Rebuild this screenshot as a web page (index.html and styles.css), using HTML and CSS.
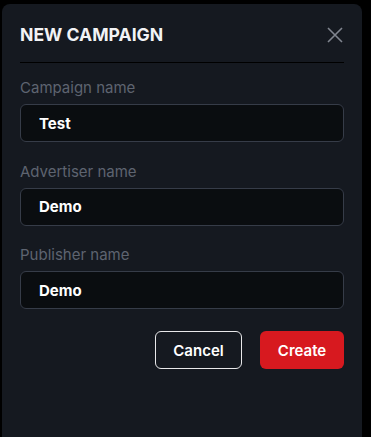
FILE: index.html
```html
<!DOCTYPE html>
<html>
<head>
  <meta charset="utf-8">
  <meta name="viewport" content="width=device-width, initial-scale=1">
  <title>New campaign</title>
  <link rel="stylesheet" href="styles.css">
</head>
<body>
  <div class="modal">
    <header class="modal-head">
      <h2>NEW CAMPAIGN</h2>
      <button type="button" class="close" aria-label="Close">
        <svg width="16" height="16" viewBox="0 0 16 16"><path d="M1 1L15 15M15 1L1 15" stroke="#80858f" stroke-width="1.6" fill="none"/></svg>
      </button>
    </header>
    <form id="campaign" action="#">
      <div class="field">
        <label for="campaign-name">Campaign name</label>
        <input type="text" id="campaign-name" name="campaign" value="Test">
      </div>
      <div class="field">
        <label for="advertiser">Advertiser name</label>
        <input type="text" id="advertiser" name="advertiser" value="Demo">
      </div>
      <div class="field">
        <label for="publisher">Publisher name</label>
        <input type="text" id="publisher" name="publisher" value="Demo">
      </div>
      <div class="actions">
        <button type="button" id="cancel">Cancel</button>
        <button type="button" id="create">Create</button>
      </div>
    </form>
  </div>
</body>
</html>
```

FILE: styles.css
```css
html, body {
  height: 100%;
}
body {
  margin: 0;
  background: #000;
  font-family: Inter, "Noto Sans", sans-serif;
  overflow: hidden;
}
.modal {
  box-sizing: border-box;
  width: 360px;
  height: calc(100% - 4px);
  margin: 4px 0 0 2px;
  padding: 0 18px 0 18px;
  background: #151920;
  border-radius: 8px 8px 0 0;
}
.modal-head {
  display: flex;
  align-items: center;
  justify-content: space-between;
  padding: 20px 0 16px;
  border-bottom: 1px solid #000;
}
h2 {
  margin: 0;
  font-size: 17.6px;
  line-height: 22px;
  font-weight: 700;
  color: #f2f3f5;
}
.close {
  background: none;
  border: none;
  padding: 0;
  margin-right: 1px;
  display: flex;
  cursor: pointer;
}
form {
  padding-top: 14px;
}
.field {
  margin-bottom: 18.5px;
}
label {
  display: block;
  font-size: 15px;
  line-height: 22px;
  color: #5e6470;
  margin-bottom: 5px;
}
input {
  box-sizing: border-box;
  width: 100%;
  height: 38px;
  padding: 0 18px;
  background: #0a0d10;
  border: 1px solid #363c48;
  border-radius: 6px;
  color: #fff;
  font-family: inherit;
  font-size: 15px;
  font-weight: 700;
  outline: none;
}
.actions {
  display: flex;
  justify-content: flex-end;
  gap: 18px;
  margin-top: 22px;
}
.actions button {
  height: 38px;
  border-radius: 6px;
  font-family: inherit;
  font-size: 15px;
  font-weight: 600;
  color: #fff;
  cursor: pointer;
}
#cancel {
  width: 87px;
  background: transparent;
  border: 1px solid #e8e8ea;
}
#create {
  width: 84px;
  background: #d7191f;
  border: none;
}
```
